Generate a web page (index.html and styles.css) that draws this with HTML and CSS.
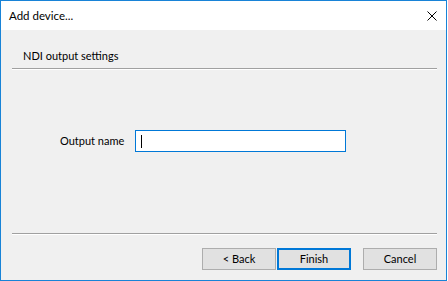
FILE: index.html
```html
<!DOCTYPE html>
<html>
<head>
<meta charset="utf-8">
<link rel="stylesheet" href="styles.css">
</head>
<body>
<div class="window">
  <div class="titlebar">
    <span class="title">Add device...</span>
    <svg class="close" width="10" height="10" viewBox="0 0 10 10"><path d="M0.5 0.5 L9.5 9.5 M9.5 0.5 L0.5 9.5" stroke="#000" stroke-width="1" fill="none"/></svg>
  </div>
  <div class="content">
    <div class="header">NDI output settings</div>
    <div class="sep"></div>
    <div class="main">
      <div class="row">
        <span class="label">Output name</span>
        <div class="textbox"><span class="caret"></span></div>
      </div>
    </div>
    <div class="sep"></div>
    <div class="footer">
      <button class="btn">&lt; Back</button>
      <button class="btn default">Finish</button>
      <button class="btn cancel">Cancel</button>
    </div>
  </div>
</div>
</body>
</html>
```
FILE: styles.css
```css
html, body {
  margin: 0;
  padding: 0;
  background: #ffffff;
}
body {
  font-family: "Lato", "Noto Sans", sans-serif;
  font-size: 11px;
  color: #000;
}
.window {
  width: 447px;
  height: 281px;
  box-sizing: border-box;
  border: 1px solid #1883d7;
  display: flex;
  flex-direction: column;
  background: #f0f0f0;
}
.titlebar {
  height: 29px;
  background: #ffffff;
  display: flex;
  align-items: center;
  justify-content: space-between;
  padding: 0 9px 0 8px;
  flex: none;
}
.title {
  font-size: 11.5px;
  line-height: 16px;
  padding-top: 1px;
}
.close {
  display: block;
  margin-top: 1px;
}
.content {
  flex: 1;
  display: flex;
  flex-direction: column;
  padding: 0 9px 0 11px;
}
.header {
  height: 38px;
  box-sizing: border-box;
  padding: 18px 0 0 11px;
  line-height: 16px;
  white-space: nowrap;
}
.sep {
  height: 1px;
  background: #a0a0a0;
  border-bottom: 1px solid #ffffff;
  flex: none;
}
.main {
  height: 163px;
  box-sizing: border-box;
  padding-top: 60px;
}
.row {
  display: flex;
  align-items: center;
  padding-left: 48px;
}
.label {
  width: 75px;
  flex: none;
  line-height: 16px;
  white-space: nowrap;
}
.textbox {
  width: 211px;
  height: 22px;
  flex: none;
  box-sizing: border-box;
  border: 1px solid #0078d7;
  background: #ffffff;
  display: flex;
  align-items: center;
  padding-left: 5px;
}
.caret {
  width: 1px;
  height: 13px;
  background: #000;
}
.footer {
  flex: 1;
  display: flex;
  justify-content: flex-end;
  align-items: flex-start;
  padding-top: 13px;
  gap: 1px;
}
.btn {
  width: 74px;
  height: 22px;
  box-sizing: border-box;
  border: 1px solid #adadad;
  background: #e1e1e1;
  font-family: "Lato", "Noto Sans", sans-serif;
  font-size: 11px;
  color: #000;
  padding: 0;
  line-height: 16px;
}
.btn.default {
  border: 2px solid #0078d7;
}
.btn.cancel {
  margin-left: 11px;
}
```
